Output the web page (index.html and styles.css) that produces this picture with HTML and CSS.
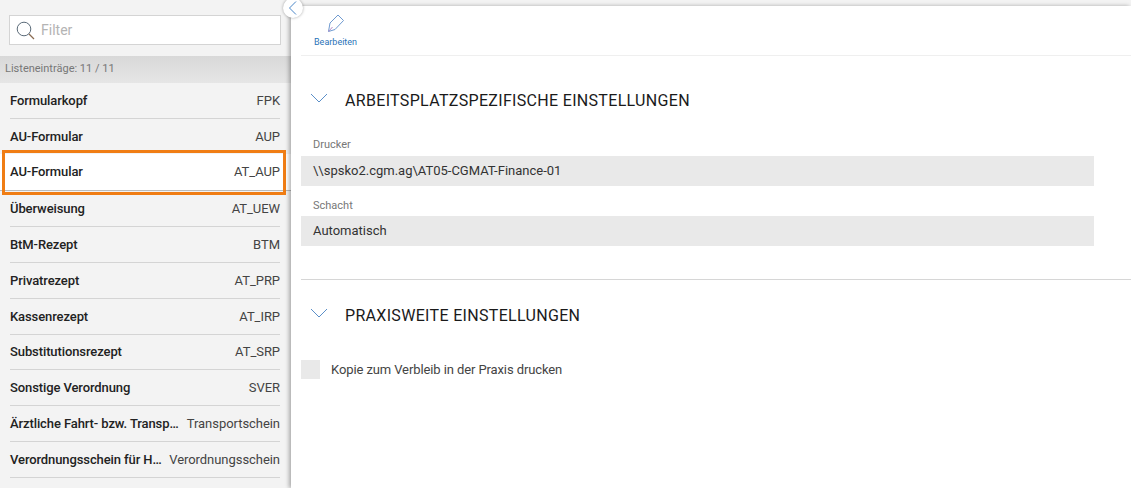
FILE: index.html
```html
<!DOCTYPE html>
<html lang="de">
<head>
    <meta charset="UTF-8" />
    <title>Einstellungen</title>
    <link rel="stylesheet" href="styles.css">
</head>
<body>
    <div class="page">
        <aside class="sidebar">
            <div class="filter-wrap">
                <div class="filter">
                    <svg class="filter-icon" width="20" height="20" viewBox="0 0 20 20" fill="none">
                        <circle cx="8" cy="8" r="6.8" stroke="#5a6a78" stroke-width="1"/>
                        <path d="M13 13 L18 18" stroke="#8a6a50" stroke-width="1.2"/>
                    </svg>
                    <span>Filter</span>
                </div>
            </div>
            <div class="list-head">Listeneinträge: 11 / 11</div>
            <ul class="list">
                <li class="row"><b>Formularkopf</b><span>FPK</span></li>
                <li class="row"><b>AU-Formular</b><span>AUP</span></li>
                <li class="row selected"><b>AU-Formular</b><span>AT_AUP</span></li>
                <li class="row"><b>Überweisung</b><span>AT_UEW</span></li>
                <li class="row"><b>BtM-Rezept</b><span>BTM</span></li>
                <li class="row"><b>Privatrezept</b><span>AT_PRP</span></li>
                <li class="row"><b>Kassenrezept</b><span>AT_IRP</span></li>
                <li class="row"><b>Substitutionsrezept</b><span>AT_SRP</span></li>
                <li class="row"><b>Sonstige Verordnung</b><span>SVER</span></li>
                <li class="row"><b>Ärztliche Fahrt- bzw. Transp…</b><span>Transportschein</span></li>
                <li class="row"><b>Verordnungsschein für H…</b><span>Verordnungsschein</span></li>
            </ul>
            <div class="highlight"></div>
        </aside>

        <button class="collapse">
            <svg width="10" height="16" viewBox="0 0 10 16" fill="none">
                <path d="M8 1.5 L1.5 8 L8 14.5" stroke="#4a86c8" stroke-width="1"/>
            </svg>
        </button>

        <main class="content">
            <div class="toolbar">
                <div class="tool">
                    <svg width="18" height="19" viewBox="0 0 18 19" fill="none">
                        <path d="M1.5 17.5 L3 9 L11 1 L16.5 6.5 L8 15.5 Z" stroke="#6f9ad0" stroke-width="1"/>
                        <path d="M1.5 17.5 L5.5 13" stroke="#b58ac8" stroke-width="1"/>
                    </svg>
                    <span>Bearbeiten</span>
                </div>
            </div>

            <section class="section first">
                <h2 class="section-title">
                    <svg width="18" height="10" viewBox="0 0 18 10" fill="none"><path d="M1 1 L9 9 L17 1" stroke="#5b8fc8" stroke-width="1"/></svg>
                    Arbeitsplatzspezifische Einstellungen
                </h2>
                <label class="field-label">Drucker</label>
                <div class="field">\\spsko2.cgm.ag\AT05-CGMAT-Finance-01</div>
                <label class="field-label">Schacht</label>
                <div class="field">Automatisch</div>
            </section>

            <section class="section second">
                <h2 class="section-title">
                    <svg width="18" height="10" viewBox="0 0 18 10" fill="none"><path d="M1 1 L9 9 L17 1" stroke="#5b8fc8" stroke-width="1"/></svg>
                    Praxisweite Einstellungen
                </h2>
                <div class="check-row">
                    <div class="check"></div>
                    <span>Kopie zum Verbleib in der Praxis drucken</span>
                </div>
            </section>
        </main>
    </div>
</body>
</html>
```

FILE: styles.css
```css
html, body {
    margin: 0;
    padding: 0;
    height: 100%;
    overflow: hidden;
}
body {
    font-family: Roboto, "Liberation Sans", sans-serif;
    background-color: #f3f3f3;
    color: #222;
}
.page {
    display: flex;
    height: 488px;
    position: relative;
}
.sidebar {
    width: 291px;
    flex-shrink: 0;
    position: relative;
}
.filter-wrap {
    padding: 15px 10px 0 9px;
    height: 41px;
}
.filter {
    height: 28px;
    background-color: #fff;
    border: 1px solid #d4d4d4;
    display: flex;
    align-items: center;
    padding-left: 6px;
    font-size: 14px;
    color: #b4b4b4;
}
.filter-icon {
    margin-right: 5px;
    margin-top: 1px;
}
.list-head {
    height: 27px;
    line-height: 26px;
    padding-left: 5px;
    font-size: 11px;
    color: #777;
    background: linear-gradient(#d8d8d8, #e6e6e6);
}
.list {
    list-style: none;
    margin: 0;
    padding: 0 11px 0 10px;
}
.row {
    height: 34.93px;
    border-bottom: 1px solid #d4d4d4;
    display: flex;
    justify-content: space-between;
    align-items: center;
    font-size: 13px;
    white-space: nowrap;
}
.row b {
    font-weight: 500;
    color: #222;
    letter-spacing: -0.1px;
}
.row span {
    color: #444;
    letter-spacing: -0.05px;
}
.row.selected {
    background-color: #fff;
    margin: -1px -11px 0 -10px;
    padding: 0 11px 0 10px;
    border-bottom: 1px solid #bbb;
    height: 36px;
    position: relative;
}
.highlight {
    position: absolute;
    left: 2px;
    top: 150px;
    width: 278px;
    height: 39px;
    border: 3px solid #f07d14;
}
.collapse {
    position: absolute;
    left: 283px;
    top: -2px;
    width: 20px;
    height: 20px;
    padding: 0;
    border: none;
    border-radius: 50%;
    background-color: #fff;
    box-shadow: 0 0 3px rgba(0, 0, 0, 0.35);
    display: flex;
    align-items: center;
    justify-content: center;
    z-index: 2;
}
.content {
    flex: 1;
    margin-top: 6px;
    background-color: #fff;
    box-shadow: -2px 0 4px rgba(0, 0, 0, 0.3);
    position: relative;
}
.toolbar {
    height: 49px;
    margin-left: 10px;
    border-bottom: 1px solid #efefef;
    display: flex;
    padding-left: 13px;
}
.tool {
    display: flex;
    flex-direction: column;
    align-items: center;
    padding-top: 8px;
    font-size: 9px;
    color: #2a73b8;
}
.tool svg {
    margin-bottom: 4px;
}
.section {
    padding: 0 37px 0 10px;
}
.section.first {
    height: 223px;
    border-bottom: 1px solid #d6d6d6;
    margin-left: 10px;
    padding: 0 37px 0 0;
}
.section-title {
    margin: 0;
    display: flex;
    align-items: center;
    gap: 17px;
    height: 20px;
    padding-top: 34px;
    padding-left: 9px;
    font-size: 16px;
    font-weight: 400;
    text-transform: uppercase;
    color: #1a1a1a;
    letter-spacing: 0.32px;
}
.section-title svg {
    margin-top: -4px;
}
.field-label {
    display: block;
    margin-top: 28px;
    margin-bottom: 5px;
    padding-left: 12px;
    font-size: 11px;
    line-height: 13px;
    color: #777;
}
.field + .field-label {
    margin-top: 13px;
    margin-bottom: 4.4px;
}
.field {
    height: 30px;
    line-height: 30px;
    background-color: #e9e9e9;
    padding-left: 12px;
    font-size: 13px;
    color: #333;
}
.section.second .section-title {
    padding-top: 25px;
}
.check-row {
    display: flex;
    align-items: center;
    gap: 11px;
    margin-top: 35px;
    font-size: 13px;
    letter-spacing: -0.1px;
    color: #444;
}
.check {
    width: 19px;
    height: 19px;
    background-color: #e9e9e9;
}
```
